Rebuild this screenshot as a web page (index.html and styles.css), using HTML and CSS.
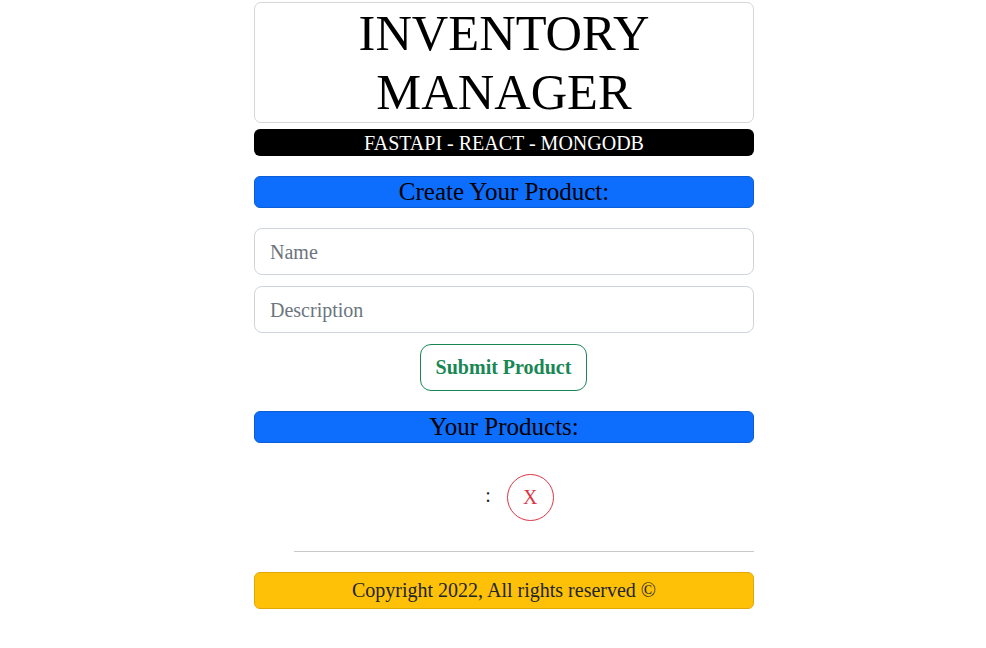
FILE: index.html
```html
<!DOCTYPE html>
<html>
<head>
<meta charset="utf-8">
<link rel="stylesheet" href="styles.css">
</head>
<body>
<div class="page">
  <div class="title-box"><h1 class="title">INVENTORY MANAGER</h1></div>
  <div class="stack-bar">FASTAPI - REACT - MONGODB</div>
  <div class="section-bar create-bar">Create Your Product:</div>
  <form class="form">
    <input class="field" type="text" placeholder="Name">
    <input class="field" type="text" placeholder="Description">
    <div class="btn-row"><button type="button" class="submit-btn">Submit Product</button></div>
  </form>
  <div class="section-bar products-bar">Your Products:</div>
  <div class="product-row">
    <span class="product-text">:</span>
    <button type="button" class="delete-btn">X</button>
  </div>
  <hr class="divider">
  <footer class="footer">Copyright 2022, All rights reserved ©</footer>
</div>
</body>
</html>
```
FILE: styles.css
```css
* { box-sizing: border-box; }
body {
  margin: 0;
  font-family: "Liberation Serif", "Times New Roman", serif;
  color: #212529;
  background: #fff;
}
.page {
  width: 500px;
  margin-left: 254px;
  padding-top: 2px;
}
.title-box {
  border: 1px solid #d6d6d6;
  border-radius: 7px;
  height: 121px;
  display: flex;
  align-items: center;
  justify-content: center;
}
.title {
  margin: 0;
  font-weight: 400;
  font-size: 50.5px;
  line-height: 59px;
  color: #000;
  text-align: center;
  width: 320px;
}
.stack-bar {
  margin-top: 6px;
  height: 27px;
  background: #000;
  color: #fff;
  border-radius: 6px;
  text-align: center;
  font-size: 20px;
  line-height: 29px;
}
.section-bar {
  background: #0d6efd;
  border: 1px solid #0b5ed7;
  border-radius: 6px;
  color: #000;
  text-align: center;
  font-size: 25px;
  line-height: 29px;
}
.create-bar { margin-top: 20px; height: 32px; }
.products-bar { margin-top: 20px; height: 32px; line-height: 29px; }
.form {
  margin: 20px 0 0;
  display: flex;
  flex-direction: column;
  gap: 11px;
}
.field {
  display: block;
  width: 100%;
  height: 47px;
  padding: 10px 15px 8px;
  font-family: inherit;
  font-size: 20px;
  color: #212529;
  border: 1px solid #ced4da;
  border-radius: 8px;
  outline: none;
}
.field::placeholder { color: #6c757d; }
.btn-row { display: flex; justify-content: center; }
.submit-btn {
  height: 47px;
  width: 167px;
  margin-left: -1px;
  padding: 0;
  background: #fff;
  border: 1px solid #198754;
  border-radius: 11px;
  color: #198754;
  font-family: inherit;
  font-weight: 700;
  font-size: 20px;
}
.product-row {
  margin-top: 31px;
  display: flex;
  justify-content: center;
  align-items: center;
  gap: 16px;
  padding-left: 31px;
}
.product-text {
  font-size: 20px;
  color: #212529;
  margin-top: -4px;
}
.delete-btn {
  width: 47px;
  height: 47px;
  padding: 0;
  border: 1px solid #dc3545;
  border-radius: 50%;
  background: #fff;
  color: #dc3545;
  font-family: inherit;
  font-size: 20px;
}
.divider {
  margin: 30px 0 0 40px;
  border: 0;
  border-top: 1px solid #c8c8c8;
  height: 0;
}
.footer {
  margin-top: 20px;
  height: 37px;
  background: #ffc107;
  border: 1px solid #e0a800;
  border-radius: 6px;
  text-align: center;
  font-size: 20px;
  line-height: 35px;
  color: #212529;
}
```
